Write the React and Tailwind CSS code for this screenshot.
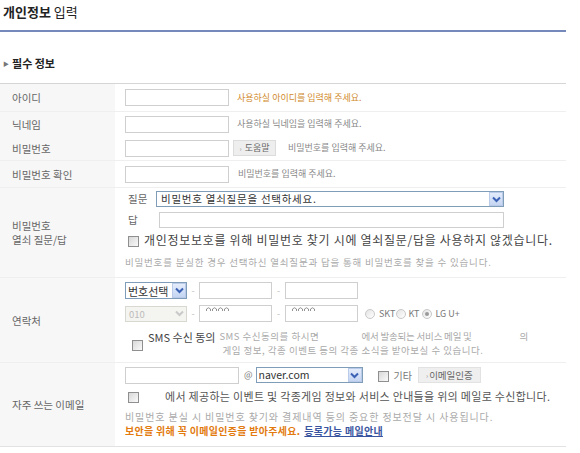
import React from "react";

const Chevron = ({ color = "#3b62b5" }) => (
  <svg width="9" height="7" viewBox="0 0 9 7">
    <path d="M1 1.5 L4.5 5 L8 1.5" fill="none" stroke={color} strokeWidth="2" />
  </svg>
);

const Arrow = ({ disabled }) => (
  <span
    className={
      disabled
        ? "flex h-full w-[14px] items-center justify-center bg-[#f4f4f0]"
        : "flex h-full w-[14px] items-center justify-center border border-[#b9cbe8] bg-gradient-to-b from-[#e3ecfb] to-[#c5d5f2]"
    }
  >
    <Chevron color={disabled ? "#c9c9c9" : "#3b62b5"} />
  </span>
);

const Check = () => (
  <span className="inline-block h-[11px] w-[11px] shrink-0 border border-[#8f8f8f] bg-gradient-to-br from-[#d8d8d8] to-[#fafafa]" />
);

const Radio = ({ on }) => (
  <span className="flex h-[10px] w-[10px] shrink-0 items-center justify-center rounded-full border border-[#c8c8c8] bg-gradient-to-br from-[#e4e4e4] to-white">
    {on && <span className="h-[4px] w-[4px] rounded-full bg-[#9a9a9a]" />}
  </span>
);

const Input = ({ w, children }) => (
  <span className={`relative block h-[17px] shrink-0 overflow-hidden border border-[#cfcfcf] bg-white ${w}`}>{children}</span>
);

const Label = ({ children }) => (
  <div className="flex w-[115px] shrink-0 items-center bg-[#f7f7f7] pl-[12px] text-[10.5px] leading-[13px] text-[#666]">
    {children}
  </div>
);

const Dash = ({ w }) => <span className={`${w} shrink-0 text-center text-[9px] text-[#bbb]`}>-</span>;

const Zeros = () => (
  <span className="absolute left-[6px] top-[1px] flex gap-[1px]">
    {[0, 1, 2, 3].map((i) => (
      <svg key={i} width="5" height="4" viewBox="0 0 5 4">
        <path d="M0.5 4 V2 Q2.5 -0.5 4.5 2 V4" fill="none" stroke="#888" strokeWidth="0.9" />
      </svg>
    ))}
  </span>
);

export default function App() {
  return (
    <div className="h-[453px] w-[580px] overflow-hidden bg-white font-['Noto_Sans_CJK_KR','Noto_Sans',sans-serif]">
      <div className="h-[30px] pl-[3px] pt-[4px] text-[13px] leading-[16px] text-[#222]">
        <span className="font-bold">개인정보</span> 입력
      </div>
      <div className="h-[2px] w-[566px] bg-[#7689bb]" />
      <div className="mt-[25px] flex h-[12px] items-center pl-[3px]">
        <span className="text-[6px] text-[#777]">▶</span>
        <span className="ml-[3px] text-[11px] font-bold leading-[12px] text-[#222]">필수 정보</span>
      </div>

      <div className="mt-[14px] w-[566px] border-t border-[#d6d6d6]">
        {/* 아이디 */}
        <div className="flex h-[28px] border-b border-[#efefef]">
          <Label>아이디</Label>
          <div className="flex flex-1 items-center pl-[10px]">
            <Input w="w-[104px]" />
            <span className="ml-[8px] text-[9px] text-[#d18b2e]">사용하실 아이디를 입력해 주세요.</span>
          </div>
        </div>
        {/* 닉네임 */}
        <div className="flex h-[24px]">
          <Label>닉네임</Label>
          <div className="flex flex-1 items-center pl-[10px]">
            <Input w="w-[104px]" />
            <span className="ml-[8px] text-[9px] text-[#888]">사용하실 닉네임을 입력해 주세요.</span>
          </div>
        </div>
        {/* 비밀번호 */}
        <div className="flex h-[25px] border-b border-[#efefef]">
          <Label>비밀번호</Label>
          <div className="flex flex-1 items-center pl-[10px]">
            <Input w="w-[104px]" />
            <span className="ml-[4px] flex h-[16px] w-[43px] items-center justify-center border border-[#dcdcdc] bg-[#eeeeee] text-[9px] text-[#666]">
              <span className="mr-[3px] text-[7px] text-[#999]">›</span>도움말
            </span>
            <span className="ml-[12px] text-[9px] text-[#888]">비밀번호를 입력해 주세요.</span>
          </div>
        </div>
        {/* 비밀번호 확인 */}
        <div className="flex h-[27px] border-b border-[#efefef]">
          <Label>비밀번호 확인</Label>
          <div className="flex flex-1 items-center pl-[10px]">
            <Input w="w-[104px]" />
            <span className="ml-[9px] text-[9px] text-[#888]">비밀번호를 입력해 주세요.</span>
          </div>
        </div>
        {/* 열쇠 질문 */}
        <div className="flex h-[90px] border-b border-[#efefef]">
          <Label>
            <span className="flex flex-col gap-[1px] leading-[13px]">
              <span>비밀번호</span>
              <span>열쇠 질문/답</span>
            </span>
          </Label>
          <div className="flex flex-1 flex-col pl-[10px] pt-[3px]">
            <div className="flex h-[16px] items-center">
              <span className="ml-[3px] w-[28px] text-[10.5px] text-[#666]">질문</span>
              <span className="flex h-[16px] w-[348px] items-center border border-[#7f9db9] bg-white">
                <span className="flex-1 pl-[4px] text-[10.5px] leading-[14px] tracking-[0.75px] text-[#333]">
                  비밀번호 열쇠질문을 선택하세요.
                </span>
                <Arrow />
              </span>
            </div>
            <div className="mt-[5px] flex h-[16px] items-center">
              <span className="ml-[3px] w-[31px] text-[10.5px] text-[#666]">답</span>
              <span className="block h-[16px] w-[345px] border border-[#cfcfcf]" />
            </div>
            <div className="mt-[4px] flex h-[16px] items-center">
              <span className="ml-[3px]">
                <Check />
              </span>
              <span className="ml-[5px] text-[12px] tracking-[0.7px] text-[#444]">
                개인정보보호를 위해 비밀번호 찾기 시에 열쇠질문/답을 사용하지 않겠습니다.
              </span>
            </div>
            <div className="mt-[6px] flex h-[16px] items-center text-[9.5px] tracking-[0.8px] text-[#aaa]">
              비밀번호를 분실한 경우 선택하신 열쇠질문과 답을 통해 비밀번호를 찾을 수 있습니다.
            </div>
          </div>
        </div>
        {/* 연락처 */}
        <div className="flex h-[85px] border-b border-[#efefef]">
          <Label>연락처</Label>
          <div className="flex flex-1 flex-col pl-[10px] pt-[4px]">
            <div className="flex h-[17px] items-center">
              <span className="flex h-[17px] w-[62px] items-center border border-[#7f9db9] bg-white">
                <span className="flex-1 pl-[2px] text-[11px] leading-[14px] text-[#333]">번호선택</span>
                <Arrow />
              </span>
              <Dash w="w-[12px]" />
              <Input w="w-[73px]" />
              <Dash w="w-[13px]" />
              <Input w="w-[73px]" />
            </div>
            <div className="mt-[6px] flex h-[17px] items-center">
              <span className="flex h-[16px] w-[62px] items-center border border-[#d8d8d0] bg-[#f4f4f0]">
                <span className="flex-1 pl-[3px] text-[9.5px] leading-[14px] text-[#bbb]">010</span>
                <Arrow disabled />
              </span>
              <Dash w="w-[12px]" />
              <Input w="w-[73px]">
                <Zeros />
              </Input>
              <Dash w="w-[13px]" />
              <Input w="w-[73px]">
                <Zeros />
              </Input>
              <span className="ml-[7px]">
                <Radio />
              </span>
              <span className="ml-[4px] text-[9px] text-[#777]">SKT</span>
              <span className="ml-[1px]">
                <Radio />
              </span>
              <span className="ml-[2px] text-[9px] text-[#777]">KT</span>
              <span className="ml-[3px]">
                <Radio on />
              </span>
              <span className="ml-[3px] text-[9px] text-[#777]">LG U+</span>
            </div>
            <div className="mt-[7px] flex items-start">
              <span className="ml-[7px] mt-[3px]">
                <Check />
              </span>
              <span className="ml-[5px] whitespace-nowrap text-[11px] leading-[16px] text-[#444]">SMS 수신 동의</span>
              <span className="ml-[4px] flex flex-col whitespace-nowrap text-[9.5px] leading-[14px] tracking-[0.5px] text-[#aaa]">
                <span className="flex">
                  <span className="w-[142px] shrink-0">SMS 수신동의를 하시면</span>
                  <span className="w-[158px] shrink-0 tracking-[-0.2px]">에서 발송되는 서비스 메일 및</span>
                  <span>의</span>
                </span>
                <span className="pl-[3px]">게임 정보, 각종 이벤트 등의 각종 소식을 받아보실 수 있습니다.</span>
              </span>
            </div>
          </div>
        </div>
        {/* 이메일 */}
        <div className="flex h-[84px] border-b border-[#e2e2e2]">
          <Label>자주 쓰는 이메일</Label>
          <div className="flex flex-1 flex-col pl-[10px] pt-[4px]">
            <div className="flex h-[16px] items-center">
              <Input w="w-[114px]" />
              <span className="ml-[5px] text-[9px] text-[#777]">@</span>
              <span className="ml-[3px] flex h-[16px] w-[107px] items-center border border-[#7f9db9] bg-white">
                <span className="flex-1 pl-[2px] text-[10.5px] leading-[14px] text-[#333]">naver.com</span>
                <Arrow />
              </span>
              <span className="ml-[15px]">
                <Check />
              </span>
              <span className="ml-[5px] text-[10px] text-[#777]">기타</span>
              <span className="ml-[6px] flex h-[16px] w-[63px] items-center justify-center border border-[#e2e2e2] bg-[#efefef] text-[9.5px] text-[#666]">
                <span className="mr-[1px] text-[7px] text-[#999]">›</span>이메일인증
              </span>
            </div>
            <div className="mt-[6px] flex h-[14px] items-center">
              <span className="ml-[3px]">
                <Check />
              </span>
              <span className="ml-[26px] text-[11px] tracking-[0.3px] text-[#555]">
                에서 제공하는 이벤트 및 각종게임 정보와 서비스 안내들을 위의 메일로 수신합니다.
              </span>
            </div>
            <div className="mt-[7px] flex h-[13px] items-center text-[10px] tracking-[0.9px] text-[#aaa]">
              비밀번호 분실 시 비밀번호 찾기와 결제내역 등의 중요한 정보전달 시 사용됩니다.
            </div>
            <div className="mt-[1px] flex h-[13px] items-center text-[10px] font-bold tracking-[0.3px]">
              <span className="text-[#e27a0e]">보안을 위해 꼭 이메일인증을 받아주세요.</span>
              <span className="ml-[4px] text-[#3a55a0] underline">등록가능 메일안내</span>
            </div>
          </div>
        </div>
      </div>
    </div>
  );
}
